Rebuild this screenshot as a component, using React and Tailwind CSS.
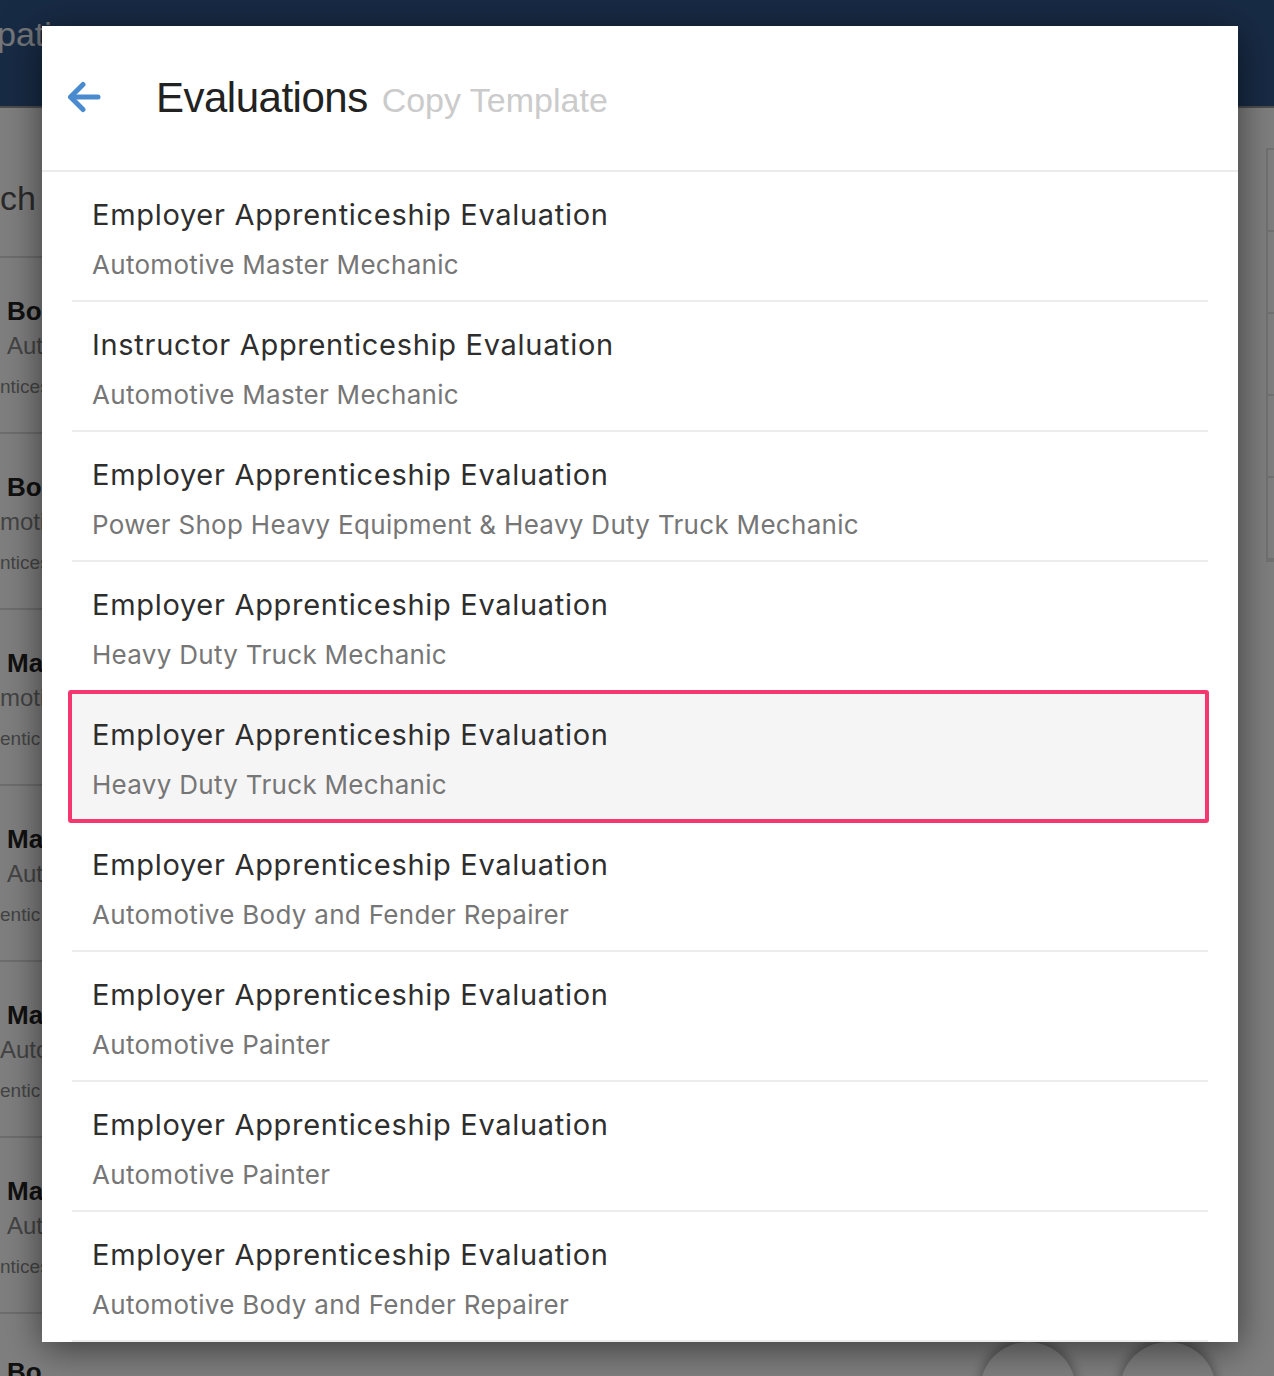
import React from "react";

const items = [
  ["Employer Apprenticeship Evaluation", "Automotive Master Mechanic"],
  ["Instructor Apprenticeship Evaluation", "Automotive Master Mechanic"],
  ["Employer Apprenticeship Evaluation", "Power Shop Heavy Equipment & Heavy Duty Truck Mechanic"],
  ["Employer Apprenticeship Evaluation", "Heavy Duty Truck Mechanic"],
  ["Employer Apprenticeship Evaluation", "Heavy Duty Truck Mechanic", true],
  ["Employer Apprenticeship Evaluation", "Automotive Body and Fender Repairer"],
  ["Employer Apprenticeship Evaluation", "Automotive Painter"],
  ["Employer Apprenticeship Evaluation", "Automotive Painter"],
  ["Employer Apprenticeship Evaluation", "Automotive Body and Fender Repairer"],
];

const bgRows = [
  ["Bo", "Aut", 7, "ntices"],
  ["Bo", "moti", 0, "ntices"],
  ["Ma", "moti", 0, "entic"],
  ["Ma", "Aut", 7, "entic"],
  ["Ma", "Auto", 0, "entic"],
  ["Ma", "Aut", 7, "ntices"],
];

function BackgroundPage() {
  return (
    <div className="flex flex-col h-full bg-white" style={{ fontFamily: '"Liberation Sans", Arial, sans-serif' }}>
      <div className="h-[108px] shrink-0 bg-[#30578a] border-b-2 border-[#9a9a9a] flex items-start pt-[12px]">
        <span className="text-[34px] leading-[44px] text-[#e8ecf2] ml-[-3px]">pati</span>
      </div>
      <div className="flex flex-1 min-h-0">
        <div className="w-[300px] flex flex-col">
          <div className="h-[148px] shrink-0 flex items-center">
            <span className="text-[34px] leading-[40px] text-[#555] mt-[32px]">ch</span>
          </div>
          {bgRows.map((r, i) => (
            <div key={i} className="h-[176px] shrink-0 border-t-2 border-[#dcdcdc] flex flex-col pt-[37px]">
              <span className="pl-[7px] text-[26px] leading-[32px] font-bold text-[#222]">{r[0]}</span>
              <span className="text-[24px] leading-[30px] text-[#888] mt-[4px]" style={{ paddingLeft: r[2] }}>{r[1]}</span>
              <span className="text-[19px] leading-[24px] text-[#888] mt-[14px]">{r[3]}</span>
            </div>
          ))}
          <div className="shrink-0 border-t-2 border-[#dcdcdc] pt-[42px]">
            <span className="pl-[7px] text-[26px] leading-[32px] font-bold text-[#222]">Bo</span>
          </div>
        </div>
        <div className="flex-1 flex flex-col items-end pt-[40px]">
          <div className="w-[10px] mr-[-2px] border-2 border-[#e4e4e4] flex flex-col">
            {[0, 1, 2, 3, 4].map((k) => (
              <div key={k} className="h-[82px] border-b-2 border-[#e4e4e4]" />
            ))}
          </div>
          <div className="flex-1" />
          <div className="flex gap-[44px] mr-[58px] mb-[-62px]">
            <div className="w-[96px] h-[96px] rounded-full bg-white shadow-[0_-4px_12px_rgba(0,0,0,0.35)]" />
            <div className="w-[96px] h-[96px] rounded-full bg-white shadow-[0_-4px_12px_rgba(0,0,0,0.35)]" />
          </div>
        </div>
      </div>
    </div>
  );
}

function BackArrow() {
  return (
    <svg width="34" height="32" viewBox="0 0 34 32" fill="none" stroke="#4a8bd0" strokeWidth="5" strokeLinecap="round" strokeLinejoin="round">
      <path d="M31 16H4" />
      <path d="M16 3.5L3.5 16L16 28.5" />
    </svg>
  );
}

export default function App() {
  return (
    <div className="relative w-[1274px] h-[1376px] overflow-hidden">
      <BackgroundPage />
      <div className="absolute inset-0 bg-black/50" />
      <div className="absolute left-[42px] top-[26px] w-[1196px] h-[1316px] bg-white shadow-[0_6px_36px_rgba(0,0,0,0.55)] flex flex-col overflow-hidden">
        <div className="h-[146px] shrink-0 border-b-2 border-[#ebebeb] flex items-center pl-[25px] pb-[3px]">
          <BackArrow />
          <div className="ml-[55px] flex items-baseline mt-[2px]" style={{ fontFamily: '"Liberation Sans", Arial, sans-serif' }}>
            <span className="text-[42px] leading-[50px] tracking-[-0.5px] text-[#222]">Evaluations</span>
            <span className="ml-[14px] text-[34px] leading-[40px] text-[#cbcbcb]">Copy Template</span>
          </div>
        </div>
        <div className="flex flex-col px-[30px]" style={{ fontFamily: 'Inter, "Liberation Sans", sans-serif' }}>
          {items.map(([t, s, hl], i) => (
            <div key={i} className="relative h-[130px] shrink-0 border-b-2 border-[#ececec]">
              {hl && (
                <div className="absolute left-[-4px] right-[-1px] top-[-2px] bottom-[-3px] border-4 border-[#f4376f] rounded-[3px] bg-[#f5f5f5]" />
              )}
              <div className="relative flex flex-col pt-[25px] pl-[20px]">
                <span className="text-[29px] leading-[35px] tracking-[0.7px] text-[#2e2e2e] whitespace-nowrap">{t}</span>
                <span className="mt-[17px] text-[26px] leading-[31px] tracking-[0.3px] text-[#767676] whitespace-nowrap">{s}</span>
              </div>
            </div>
          ))}
        </div>
      </div>
    </div>
  );
}
